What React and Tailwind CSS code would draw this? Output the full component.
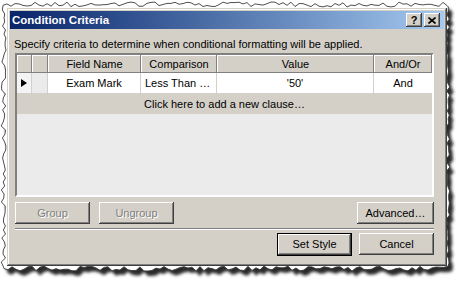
import React from "react";

function rng(seed) {
  let s = seed;
  return () => {
    s = (s * 1103515245 + 12345) % 2147483648;
    return s / 2147483648;
  };
}

function tornPath() {
  const r = rng(11);
  const pts = [];
  for (let x = 3; x <= 448; x += 4) pts.push([x, 2 + r() * 5]);
  for (let y = 7; y <= 266; y += 4) pts.push([446 + r() * 4, y]);
  for (let x = 448; x >= 3; x -= 4) pts.push([x, 266 + r() * 5]);
  for (let y = 266; y >= 7; y -= 4) pts.push([1 + r() * 5, y]);
  return "M" + pts.map((p) => p[0].toFixed(1) + "," + p[1].toFixed(1)).join(" L") + " Z";
}

const raised =
  "shadow-[inset_-1px_-1px_0_#404040,inset_1px_1px_0_#ffffff,inset_-2px_-2px_0_#808080,inset_2px_2px_0_#d4d0c8]";

function Btn({ children, w, disabled, isDefault }) {
  if (isDefault) {
    return (
      <div className={`${w} h-[23px] border border-black bg-[#d4d0c8] flex`}>
        <div className="flex-1 flex items-center justify-center text-black shadow-[inset_-1px_-1px_0_#404040,inset_1px_1px_0_#ffffff,inset_-2px_-2px_0_#808080]">
          {children}
        </div>
      </div>
    );
  }
  return (
    <div
      className={`${w} h-[22px] bg-[#d4d0c8] ${raised} flex items-center justify-center ${
        disabled ? "text-[#808080] [text-shadow:1px_1px_0_#ffffff]" : "text-black"
      }`}
    >
      {children}
    </div>
  );
}

export default function App() {
  const d = tornPath();
  return (
    <div className="relative w-[460px] h-[283px] bg-white overflow-hidden font-['Liberation_Sans',Arial,sans-serif] text-[11px] leading-[13px]">
      <svg className="absolute inset-0" width="460" height="283">
        <defs>
          <filter id="blur" x="-5%" y="-5%" width="110%" height="110%">
            <feGaussianBlur stdDeviation="1.5" />
          </filter>
        </defs>
        <path d={d} transform="translate(4,5)" fill="#2a2a2a" filter="url(#blur)" />
        <path d={d} fill="#ffffff" stroke="#3a3a3a" strokeWidth="0.9" />
      </svg>
      <div className="relative ml-[7px] mt-[8px] w-[440px] h-[258px] bg-[#d4d0c8] p-[3px] shadow-[inset_-1px_-1px_0_#404040,inset_1px_1px_0_#d4d0c8,inset_-2px_-2px_0_#808080,inset_2px_2px_0_#ffffff] flex flex-col">
        <div className="h-[18px] bg-gradient-to-r from-[#0a246a] to-[#a6caf0] flex items-center pl-[2px] pr-[4px]">
          <span className="text-white font-bold text-[11.5px]">Condition Criteria</span>
          <div className="ml-auto flex gap-[2px]">
            <div className={`w-[16px] h-[14px] bg-[#d4d0c8] ${raised} flex items-center justify-center font-bold text-[11px] text-black`}>
              ?
            </div>
            <div className={`w-[16px] h-[14px] bg-[#d4d0c8] ${raised} flex items-center justify-center`}>
              <svg width="8" height="7" viewBox="0 0 8 7">
                <path d="M0.5 0.5 L7.5 6.5 M7.5 0.5 L0.5 6.5" stroke="#000" strokeWidth="1.6" />
              </svg>
            </div>
          </div>
        </div>
        <div className="flex-1 flex flex-col">
          <div className="pl-[4px] mt-[9px] text-black">
            Specify criteria to determine when conditional formatting will be applied.
          </div>
          <div className="ml-[5px] mt-[2px] w-[419px] h-[144px] border-t-2 border-l-2 border-t-[#808080] border-l-[#808080] border-b-2 border-r-2 border-b-[#ffffff] border-r-[#ffffff] bg-[#ebebeb] flex flex-col">
            <div className="flex h-[18px] text-black">
              {[
                ["w-[15px]", ""],
                ["w-[16px]", ""],
                ["w-[93px]", "Field Name"],
                ["w-[76px]", "Comparison"],
                ["w-[157px]", "Value"],
                ["w-[58px]", "And/Or"],
              ].map(([w, t], i) => (
                <div
                  key={i}
                  className={`${w} h-full bg-[#d4d0c8] shadow-[inset_-1px_-1px_0_#808080,inset_1px_1px_0_#ffffff] flex items-center justify-center`}
                >
                  {t}
                </div>
              ))}
            </div>
            <div className="flex h-[21px] bg-white text-black">
              <div className="w-[15px] h-full bg-[#f4f4f4] border-r border-b border-[#d4d0c8] flex items-center justify-center">
                <svg width="7" height="8" viewBox="0 0 7 8">
                  <path d="M0 0 L6 4 L0 8 Z" fill="#000" />
                </svg>
              </div>
              <div className="w-[16px] h-full bg-[#ebebeb] border-r border-b border-[#d4d0c8]" />
              <div className="w-[93px] h-full border-r border-b border-[#d4d0c8] flex items-center justify-center">
                Exam Mark
              </div>
              <div className="w-[76px] h-full border-r border-b border-[#d4d0c8] flex items-center pl-[4px]">
                Less Than …
              </div>
              <div className="w-[157px] h-full border-r border-b border-[#d4d0c8] flex items-center justify-center">
                '50'
              </div>
              <div className="w-[58px] h-full border-b border-[#d4d0c8] flex items-center justify-center">
                And
              </div>
            </div>
            <div className="h-[20px] bg-[#d4d0c8] flex items-center justify-center text-black">
              Click here to add a new clause…
            </div>
          </div>
          <div className="ml-[5px] mt-[5px] w-[419px] flex">
            <Btn w="w-[75px]" disabled>
              Group
            </Btn>
            <div className="w-[9px]" />
            <Btn w="w-[75px]" disabled>
              Ungroup
            </Btn>
            <div className="ml-auto">
              <Btn w="w-[77px]">Advanced…</Btn>
            </div>
          </div>
          <div className="ml-[5px] mt-[4px] w-[419px] h-[2px] border-t border-t-[#808080] border-b border-b-white" />
          <div className="ml-[5px] mt-[3px] w-[419px] flex justify-end gap-[7px]">
            <Btn w="w-[75px]" isDefault>
              Set Style
            </Btn>
            <Btn w="w-[75px]">Cancel</Btn>
          </div>
        </div>
      </div>
    </div>
  );
}
